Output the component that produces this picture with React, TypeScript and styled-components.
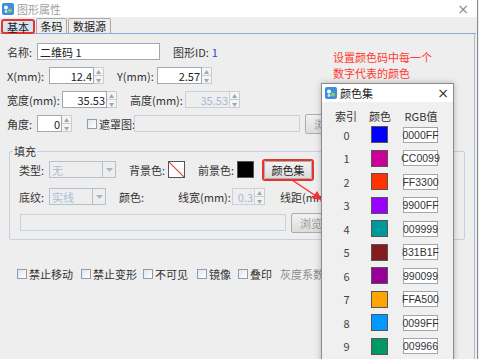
import styled, { createGlobalStyle } from "styled-components";

const Global = createGlobalStyle`
  html, body { margin: 0; padding: 0; background: #eeeeee; overflow: hidden; }
  body { font-family: "Noto Sans CJK SC", "Noto Sans", sans-serif; font-size: 11px; color: #333; }
`;

const Screen = styled.div`
  position: relative;
  width: 479px;
  height: 359px;
  overflow: hidden;
  background: #eeeeee;
`;

const Window = styled.div`
  width: 478px;
  height: 359px;
  border-right: 1px solid #8a8a8a;
  display: flex;
  flex-direction: column;
  box-sizing: border-box;
`;

const TitleBar = styled.div`
  height: 17px;
  flex: none;
  background: #ffffff;
  display: flex;
  align-items: center;
  padding: 0 2px;
  gap: 3px;
  color: #a0a0a0;
  font-size: 11px;
`;

const Close = styled.span`
  margin-left: auto;
  margin-right: 6px;
  font-size: 14px;
  color: #8a8a8a;
  font-family: "DejaVu Sans", sans-serif;
  line-height: 1;
`;

const TabBar = styled.div`
  height: 16px;
  flex: none;
  display: flex;
  align-items: flex-end;
  padding-left: 1px;
  gap: 1px;
  border-bottom: 1px solid #8fa9d8;
  width: 475px;
`;

const Tab = styled.div<{ $active?: boolean; $w: number }>`
  height: 15px;
  width: ${(p) => p.$w}px;
  display: flex;
  align-items: center;
  justify-content: center;
  font-size: 11px;
  color: #222;
  box-sizing: border-box;
  background: ${(p) => (p.$active ? "#d6e4f3" : "#eeeeee")};
  border: ${(p) => (p.$active ? "2px solid #e4342c" : "1px solid #a9a9a9")};
  border-bottom: ${(p) => (p.$active ? "2px solid #e4342c" : "none")};
  border-radius: ${(p) => (p.$active ? "3px" : "2px 2px 0 0")};
  margin-bottom: ${(p) => (p.$active ? "-1px" : "0")};
`;

const Panel = styled.div`
  flex: 1;
  width: 475px;
  box-sizing: border-box;
  border-right: 1px solid #a9bcdc;
  padding: 9px 0 0 7px;
  display: flex;
  flex-direction: column;
  gap: 7px;
`;

const Row = styled.div`
  display: flex;
  align-items: center;
  height: 17px;
`;

const Label = styled.span<{ $w?: number; $ml?: number; $muted?: boolean }>`
  width: ${(p) => (p.$w ? `${p.$w}px` : "auto")};
  margin-left: ${(p) => p.$ml ?? 0}px;
  flex: none;
  white-space: nowrap;
  color: ${(p) => (p.$muted ? "#8c8c8c" : "#333")};
  font-size: 11px;
`;

const IdValue = styled.span`
  margin-left: 3px;
  color: #3b3fd0;
`;

const TextBox = styled.div<{ $w: number; $disabled?: boolean; $ml?: number }>`
  width: ${(p) => p.$w}px;
  height: 17px;
  margin-left: ${(p) => p.$ml ?? 0}px;
  flex: none;
  box-sizing: border-box;
  border: 1px solid ${(p) => (p.$disabled ? "#c8d2de" : "#a3a8b0")};
  background: ${(p) => (p.$disabled ? "#eeeeee" : "#ffffff")};
  padding: 0 2px;
  display: flex;
  align-items: center;
  font-size: 11px;
  color: #222;
`;

const SpinWrap = styled.div<{ $w: number; $ml?: number }>`
  width: ${(p) => p.$w}px;
  height: 17px;
  margin-left: ${(p) => p.$ml ?? 0}px;
  flex: none;
  display: flex;
`;

const SpinField = styled.div<{ $disabled?: boolean }>`
  flex: 1;
  box-sizing: border-box;
  border: 1px solid ${(p) => (p.$disabled ? "#c8d2de" : "#a3a8b0")};
  background: ${(p) => (p.$disabled ? "#eeeeee" : "#ffffff")};
  color: ${(p) => (p.$disabled ? "#a9bad0" : "#222")};
  display: flex;
  align-items: center;
  justify-content: flex-end;
  padding-right: 1px;
  font-size: 11px;
`;

const SpinCol = styled.div`
  width: 10px;
  display: flex;
  flex-direction: column;
`;

const SpinBtn = styled.div`
  flex: 1;
  box-sizing: border-box;
  border: 1px solid #c9ccd1;
  border-left: none;
  background: #f4f4f4;
  display: flex;
  align-items: center;
  justify-content: center;
  font-size: 5px;
  color: #9aa;
  line-height: 1;
  & + & { border-top: none; }
`;

const Check = styled.span<{ $ml?: number }>`
  width: 10px;
  height: 10px;
  margin-left: ${(p) => p.$ml ?? 0}px;
  margin-right: 2px;
  flex: none;
  box-sizing: border-box;
  border: 1px solid #8e9cb2;
  background: linear-gradient(135deg, #dfe6ef, #ffffff);
`;

const PushButton = styled.div<{ $w: number; $ml?: number; $h?: number; $dark?: boolean }>`
  width: ${(p) => p.$w}px;
  height: ${(p) => p.$h ?? 20}px;
  margin-left: ${(p) => p.$ml ?? 0}px;
  flex: none;
  box-sizing: border-box;
  border: 1px solid #acacac;
  border-radius: 2px;
  background: linear-gradient(#f2f2f2, #dcdcdc);
  display: flex;
  align-items: center;
  justify-content: center;
  font-size: 11px;
  color: ${(p) => (p.$dark ? "#222" : "#9a9a9a")};
`;

const Highlight = styled.div<{ $ml?: number }>`
  margin-left: ${(p) => p.$ml ?? 0}px;
  border: 2px solid #e4342c;
  border-radius: 3px;
  display: flex;
`;

const Group = styled.fieldset`
  margin: 4px 0 0 2px;
  width: 456px;
  height: 97px;
  box-sizing: border-box;
  border: 1px solid #c3d0e2;
  border-radius: 2px;
  padding: 0 0 0 9px;
  display: flex;
  flex-direction: column;
  gap: 8px;
`;

const Legend = styled.legend`
  padding: 0 1px;
  margin-left: -6px;
  font-size: 11px;
  color: #333;
`;

const GroupRow = styled.div<{ $h?: number }>`
  display: flex;
  align-items: center;
  height: ${(p) => p.$h ?? 17}px;
`;

const Combo = styled.div<{ $w: number }>`
  width: ${(p) => p.$w}px;
  height: 17px;
  flex: none;
  display: flex;
  box-sizing: border-box;
  border: 1px solid #b7c1cc;
`;

const ComboText = styled.div`
  flex: 1;
  border-right: 1px solid #b7c1cc;
  color: #a9bfd8;
  font-size: 11px;
  padding-left: 2px;
  display: flex;
  align-items: center;
`;

const ComboArrow = styled.div`
  width: 12px;
  display: flex;
  align-items: center;
  justify-content: center;
`;

const Swatch = styled.div<{ $color: string; $ml?: number }>`
  width: 17px;
  height: 17px;
  flex: none;
  margin-left: ${(p) => p.$ml ?? 0}px;
  box-sizing: border-box;
  border: 1px solid #555;
  background: ${(p) => p.$color};
`;

const CheckRow = styled.div`
  display: flex;
  align-items: center;
  margin: 19px 0 0 10px;
  height: 16px;
`;

const Note = styled.div`
  position: absolute;
  left: 333px;
  top: 49px;
  color: #ff3b30;
  font-size: 11px;
  line-height: 16px;
`;

const Arrow = styled.svg`
  position: absolute;
  left: 288px;
  top: 176px;
`;

const Popup = styled.div`
  position: absolute;
  left: 321px;
  top: 83px;
  width: 133px;
  height: 290px;
  box-sizing: border-box;
  border: 1px solid #8c8c8c;
  background: #f0f0f0;
  box-shadow: 0 0 6px rgba(0, 0, 0, 0.25);
  display: flex;
  flex-direction: column;
`;

const PopupTitle = styled.div`
  height: 18px;
  flex: none;
  background: #ffffff;
  display: flex;
  align-items: center;
  padding-left: 3px;
  gap: 3px;
  font-size: 11px;
  color: #222;
`;

const PopupClose = styled.span`
  margin-left: auto;
  margin-right: 4px;
  font-size: 14px;
  font-family: "DejaVu Sans", sans-serif;
  color: #333;
  line-height: 1;
`;

const Table = styled.div`
  padding-top: 7px;
  display: flex;
  flex-direction: column;
`;

const HeadRow = styled.div`
  height: 14px;
  display: flex;
  align-items: center;
  font-size: 11px;
  color: #333;
`;

const Cell = styled.span<{ $w: number }>`
  width: ${(p) => p.$w}px;
  flex: none;
  display: flex;
  justify-content: center;
  white-space: nowrap;
`;

const ColorRow = styled.div`
  height: 23.5px;
  display: flex;
  align-items: center;
  font-size: 11px;
  color: #444;
`;

const RgbBox = styled.div`
  width: 35px;
  height: 16px;
  margin-left: 15px;
  box-sizing: border-box;
  border: 1px solid #a6a6a6;
  background: #ffffff;
  font-family: "Liberation Sans", "Noto Sans", sans-serif;
  font-size: 10.5px;
  color: #333;
  display: flex;
  align-items: center;
  justify-content: center;
  white-space: nowrap;
`;

const AppIcon = () => (
  <svg width="12" height="12" viewBox="0 0 12 12">
    <rect x="0" y="0" width="12" height="12" rx="2" fill="#3d8de0" />
    <circle cx="4" cy="4.5" r="2" fill="#ffffff" />
    <circle cx="8" cy="7.5" r="2" fill="#8fd14f" />
    <circle cx="4" cy="8.5" r="1.4" fill="#cfe6ff" />
  </svg>
);

const Spinner = ({ w, ml, value, disabled }: { w: number; ml?: number; value: string; disabled?: boolean }) => (
  <SpinWrap $w={w} $ml={ml}>
    <SpinField $disabled={disabled}>{value}</SpinField>
    <SpinCol>
      <SpinBtn>▲</SpinBtn>
      <SpinBtn>▼</SpinBtn>
    </SpinCol>
  </SpinWrap>
);

const ComboBox = ({ w, value }: { w: number; value: string }) => (
  <Combo $w={w}>
    <ComboText>{value}</ComboText>
    <ComboArrow>
      <svg width="7" height="4" viewBox="0 0 7 4">
        <path d="M0 0 L7 0 L3.5 4 Z" fill="#a9b6c6" />
      </svg>
    </ComboArrow>
  </Combo>
);

const colors = [
  ["#0000ff", "0000FF"],
  ["#cc0099", "CC0099"],
  ["#ff3300", "FF3300"],
  ["#9900ff", "9900FF"],
  ["#009999", "009999"],
  ["#831b1f", "831B1F"],
  ["#990099", "990099"],
  ["#ffa500", "FFA500"],
  ["#0099ff", "0099FF"],
  ["#009966", "009966"],
];

export default function App() {
  return (
    <Screen>
      <Global />
      <Window>
        <TitleBar>
          <AppIcon />
          图形属性
          <Close>×</Close>
        </TitleBar>
        <TabBar>
          <Tab $active $w={34}>基本</Tab>
          <Tab $w={31}>条码</Tab>
          <Tab $w={43}>数据源</Tab>
        </TabBar>
        <Panel>
          <Row>
            <Label $w={30}>名称:</Label>
            <TextBox $w={123}>二维码 1</TextBox>
            <Label $ml={13}>图形ID:</Label>
            <IdValue>1</IdValue>
          </Row>
          <Row>
            <Label $w={42}>X(mm):</Label>
            <Spinner w={55} value="12.4" />
            <Label $ml={13} $w={40}>Y(mm):</Label>
            <Spinner w={55} value="2.57" />
          </Row>
          <Row>
            <Label $w={55}>宽度(mm):</Label>
            <Spinner w={55} value="35.53" />
            <Label $ml={13} $w={55}>高度(mm):</Label>
            <Spinner w={55} value="35.53" disabled />
          </Row>
          <Row>
            <Label $w={30}>角度:</Label>
            <Spinner w={35} value="0" />
            <Check $ml={15} />
            <Label $w={35}>遮罩图:</Label>
            <TextBox $w={166} $disabled />
            <PushButton $w={40} $ml={5}>浏览</PushButton>
          </Row>
          <Group>
            <Legend>填充</Legend>
            <GroupRow $h={21}>
              <Label $w={30}>类型:</Label>
              <ComboBox w={67} value="无" />
              <Label $ml={13} $w={39}>背景色:</Label>
              <Swatch $color="linear-gradient(45deg, #fff 46%, #e84a4a 48%, #e84a4a 52%, #fff 54%)" />
              <Label $ml={13} $w={39}>前景色:</Label>
              <Swatch $color="#000000" />
              <Highlight $ml={8}>
                <PushButton $w={48} $h={18} $dark>颜色集</PushButton>
              </Highlight>
            </GroupRow>
            <GroupRow>
              <Label $w={30}>底纹:</Label>
              <ComboBox w={57} value="实线" />
              <Label $ml={13} $w={59}>颜色:</Label>
              <Label $w={54}>线宽(mm):</Label>
              <Spinner w={33} value="0.3" disabled />
              <Label $ml={15}>线距(mm):</Label>
            </GroupRow>
            <GroupRow $h={19}>
              <TextBox $w={266} $ml={1} $disabled />
              <PushButton $w={40} $ml={5}>浏览</PushButton>
            </GroupRow>
          </Group>
          <CheckRow>
            <Check />
            <Label $w={50}>禁止移动</Label>
            <Check $ml={2} />
            <Label $w={50}>禁止变形</Label>
            <Check />
            <Label $w={42}>不可见</Label>
            <Check />
            <Label $w={29}>镜像</Label>
            <Check />
            <Label $w={30}>叠印</Label>
            <Label $muted>灰度系数:</Label>
          </CheckRow>
        </Panel>
      </Window>

      <Note>
        设置颜色码中每一个
        <br />
        数字代表的颜色
      </Note>

      <Arrow width="36" height="28" viewBox="0 0 36 28">
        <line x1="4" y1="4" x2="28" y2="20" stroke="#ff3030" strokeWidth="1.5" />
        <path d="M34 24 L24 22.5 L29 15 Z" fill="#ff3030" />
      </Arrow>

      <Popup>
        <PopupTitle>
          <AppIcon />
          颜色集
          <PopupClose>×</PopupClose>
        </PopupTitle>
        <Table>
          <HeadRow>
            <Cell $w={48}>索引</Cell>
            <Cell $w={20}>颜色</Cell>
            <Cell $w={62}>RGB值</Cell>
          </HeadRow>
          {colors.map(([c, hex], i) => (
            <ColorRow key={hex}>
              <Cell $w={49}>{i}</Cell>
              <Swatch $color={c} />
              <RgbBox>{hex}</RgbBox>
            </ColorRow>
          ))}
        </Table>
      </Popup>
    </Screen>
  );
}
